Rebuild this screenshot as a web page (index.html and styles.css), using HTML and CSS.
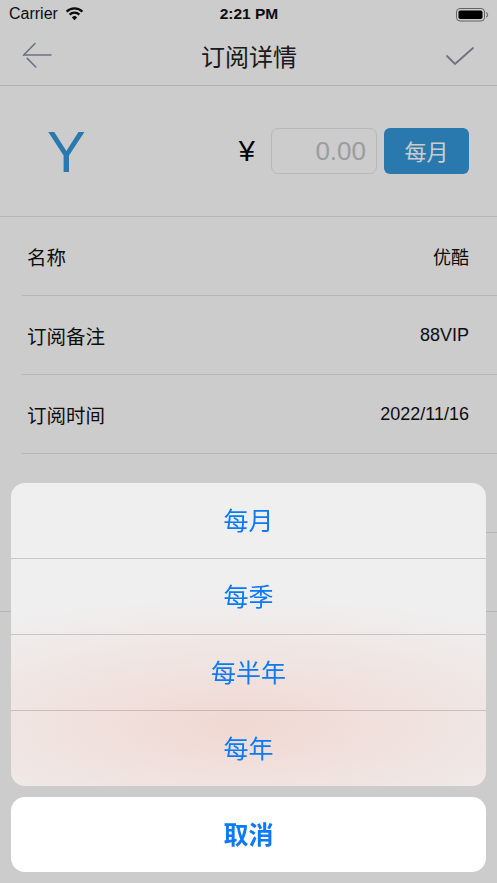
FILE: index.html
```html
<!DOCTYPE html>
<html lang="zh-CN">
<head>
    <meta charset="UTF-8">
    <meta name="viewport" content="width=device-width, initial-scale=1.0">
    <title>订阅详情</title>
    <link rel="stylesheet" href="styles.css">
</head>
<body>
    <div class="status-bar">
        <div class="status-left">
            <span>Carrier</span>
            <svg class="wifi" width="19" height="14" viewBox="0 0 19 14">
                <path d="M9.5 13.2 L6.9 10.4 A3.7 3.7 0 0 1 12.1 10.4 Z" fill="#111"/>
                <path d="M4.6 7.6 A7 7 0 0 1 14.4 7.6" fill="none" stroke="#111" stroke-width="2.2"/>
                <path d="M1.6 4.6 A11.2 11.2 0 0 1 17.4 4.6" fill="none" stroke="#111" stroke-width="2.2"/>
            </svg>
        </div>
        <div class="status-time">2:21 PM</div>
        <div class="status-right">
            <svg width="33" height="14" viewBox="0 0 33 14">
                <rect x="0.5" y="0.5" width="28" height="12.5" rx="3.5" fill="none" stroke="#7a7a7a"/>
                <rect x="2.5" y="2.5" width="24" height="8.5" rx="1.8" fill="#000"/>
                <path d="M30 4.5 Q31.6 4.8 31.6 6.75 Q31.6 8.7 30 9" fill="none" stroke="#8a8a8a" stroke-width="1.2"/>
            </svg>
        </div>
    </div>

    <header class="nav-bar">
        <div class="nav-left">
            <svg width="30" height="30" viewBox="0 0 30 30">
                <path d="M1.5 14.2 L13 2.5 M5.2 17.4 L13.8 26 M2.5 14 H29" fill="none" stroke="#8a8fa0" stroke-width="1.6" stroke-linecap="round"/>
            </svg>
        </div>
        <h1 class="nav-title">订阅详情</h1>
        <div class="nav-right">
            <svg width="32" height="24" viewBox="0 0 32 24">
                <path d="M3 11 L11 19 L29 3" fill="none" stroke="#8a8fa0" stroke-width="1.8" stroke-linecap="round"/>
            </svg>
        </div>
    </header>

    <section class="summary">
        <div class="summary-icon">Y</div>
        <div class="summary-price">
            <span class="currency">¥</span>
            <input class="price-input" type="text" placeholder="0.00">
            <button class="cycle-btn" type="button">每月</button>
        </div>
    </section>

    <ul class="detail-list">
        <li class="detail-row">
            <span class="row-label">名称</span>
            <span class="row-value">优酷</span>
        </li>
        <li class="detail-row">
            <span class="row-label">订阅备注</span>
            <span class="row-value">88VIP</span>
        </li>
        <li class="detail-row">
            <span class="row-label">订阅时间</span>
            <span class="row-value">2022/11/16</span>
        </li>
        <li class="detail-row">
            <span class="row-label">续订周期</span>
            <span class="row-value">每月</span>
        </li>
        <li class="detail-row">
            <span class="row-label">提醒</span>
            <span class="row-value">提前一天</span>
        </li>
    </ul>

    <div class="backdrop"></div>

    <div class="action-sheet">
        <div class="sheet-group">
            <div class="sheet-item">每月</div>
            <div class="sheet-item">每季</div>
            <div class="sheet-item">每半年</div>
            <div class="sheet-item">每年</div>
        </div>
        <div class="sheet-cancel">取消</div>
    </div>
</body>
</html>
```

FILE: styles.css
```css
body {
    margin: 0;
    padding: 0;
    background-color: #ffffff;
    font-family: "Liberation Sans", "Noto Sans CJK SC", sans-serif;
    color: #111;
    width: 497px;
    height: 883px;
    overflow: hidden;
}
.status-bar {
    height: 28px;
    display: grid;
    grid-template-columns: 1fr auto 1fr;
    align-items: center;
    padding: 0 8px 0 9px;
    font-size: 16px;
}
.status-left {
    display: flex;
    align-items: center;
    gap: 7px;
}
.wifi {
    margin-top: -1px;
}
.status-time {
    font-weight: bold;
    font-size: 15.5px;
}
.status-right {
    display: flex;
    justify-content: flex-end;
    padding-top: 1px;
}
.nav-bar {
    height: 57px;
    display: grid;
    grid-template-columns: 1fr auto 1fr;
    align-items: center;
    padding: 0 21px 0 22px;
    border-bottom: 1px solid #e0e0e0;
}
.nav-left svg {
    display: block;
    margin-top: -2px;
}
.nav-right {
    display: flex;
    justify-content: flex-end;
}
.nav-right svg {
    display: block;
}
.nav-title {
    margin: 0 0 2px;
    font-family: "Noto Sans CJK SC", sans-serif;
    font-size: 24px;
    font-weight: normal;
    color: #222;
}
.summary {
    height: 130px;
    display: flex;
    align-items: center;
    justify-content: space-between;
    padding: 0 28px 0 47px;
    border-bottom: 1px solid #e4e4e4;
}
.summary-icon {
    font-size: 58px;
    line-height: 1;
    color: #3498db;
    margin-top: 2px;
}
.summary-price {
    display: flex;
    align-items: center;
}
.currency {
    font-size: 29px;
    margin-right: 16px;
    color: #000;
}
.price-input {
    box-sizing: border-box;
    width: 106px;
    height: 46px;
    border: 1px solid #e6e6e6;
    border-radius: 7px;
    padding: 0 10px 0 0;
    text-align: right;
    font-family: "Liberation Sans", sans-serif;
    font-size: 26px;
    background: #fff;
    outline: none;
}
.price-input::placeholder {
    color: #c4c4c8;
}
.cycle-btn {
    width: 85px;
    height: 46px;
    margin-left: 7px;
    border: none;
    border-radius: 6px;
    background-color: #3498db;
    color: #fff;
    font-family: "Noto Sans CJK SC", sans-serif;
    font-size: 22px;
    padding: 0 0 2px;
}
.detail-list {
    list-style: none;
    margin: 0;
    padding: 0;
    border-bottom: 1px solid #e4e4e4;
}
.detail-row {
    box-sizing: border-box;
    height: 79px;
    margin-left: 22px;
    padding: 0 28px 0 5px;
    display: flex;
    align-items: center;
    justify-content: space-between;
    border-bottom: 1px solid #e4e4e4;
}
.detail-row:last-child {
    border-bottom: none;
    height: 78px;
}
.row-label {
    font-family: "Noto Sans CJK SC", sans-serif;
    font-size: 19.5px;
}
.row-value {
    font-size: 18px;
}
.backdrop {
    position: fixed;
    top: 0;
    left: 0;
    right: 0;
    bottom: 0;
    background: rgba(0, 0, 0, 0.2);
}
.action-sheet {
    position: fixed;
    left: 11px;
    right: 11px;
    bottom: 11px;
    font-family: "Noto Sans CJK SC", sans-serif;
    color: #0a7af8;
}
.sheet-group {
    border-radius: 14px;
    overflow: hidden;
    background:
        radial-gradient(ellipse 85% 42% at 48% 80%, rgba(241, 216, 210, 1), rgba(241, 216, 210, 0)),
        #efefef;
}
.sheet-item {
    box-sizing: border-box;
    height: 76px;
    padding-bottom: 4px;
    display: flex;
    align-items: center;
    justify-content: center;
    font-size: 25px;
    border-top: 1px solid rgba(0, 0, 0, 0.16);
}
.sheet-item:first-child {
    border-top: none;
    height: 75px;
}
.sheet-cancel {
    box-sizing: border-box;
    margin-top: 11px;
    height: 75px;
    padding-bottom: 4px;
    border-radius: 14px;
    background: #fff;
    display: flex;
    align-items: center;
    justify-content: center;
    font-size: 25px;
    font-weight: bold;
}
```
